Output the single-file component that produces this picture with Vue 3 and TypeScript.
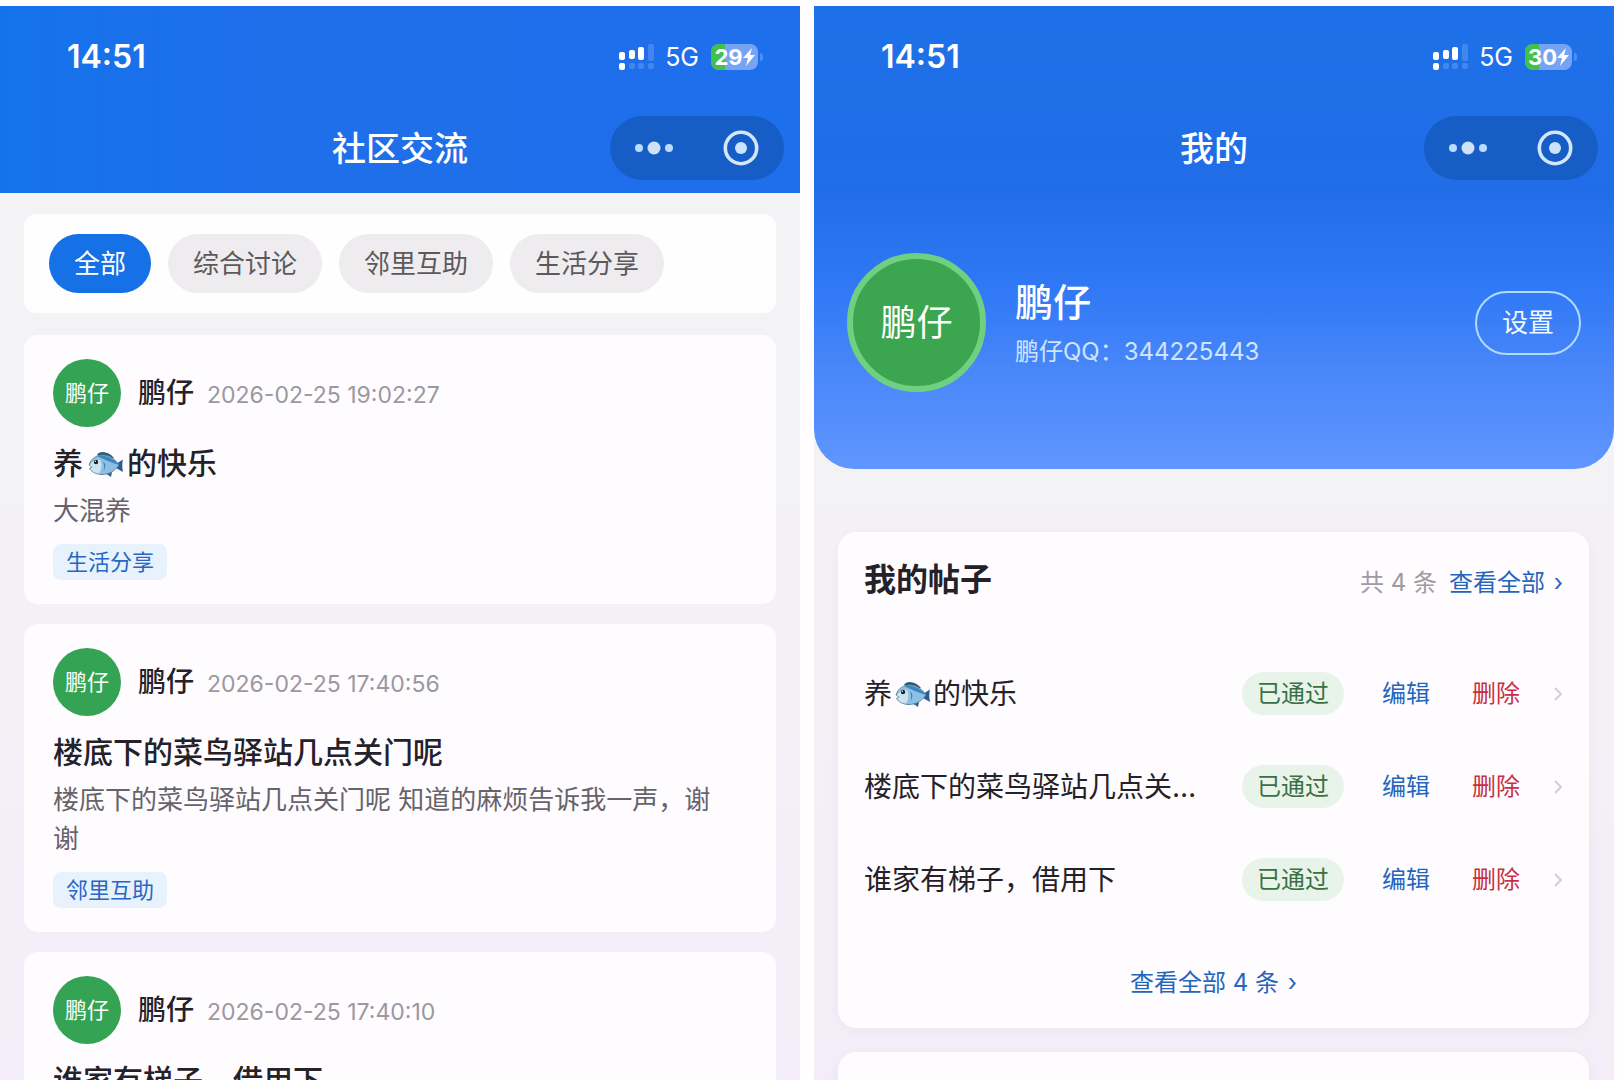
<script setup lang="ts">
import { defineComponent, h, ref } from 'vue'

interface TitlePart {
  kind: 'text' | 'fish'
  value: string
}

interface Post {
  id: number
  author: string
  time: string
  title: string
  body: string
  tag: string
}

const FISH = '🐟'

const tabs: string[] = ['全部', '综合讨论', '邻里互助', '生活分享']
const activeTab = ref<string>('全部')

const posts: Post[] = [
  {
    id: 1,
    author: '鹏仔',
    time: '2026-02-25 19:02:27',
    title: '养🐟的快乐',
    body: '大混养',
    tag: '生活分享',
  },
  {
    id: 2,
    author: '鹏仔',
    time: '2026-02-25 17:40:56',
    title: '楼底下的菜鸟驿站几点关门呢',
    body: '楼底下的菜鸟驿站几点关门呢 知道的麻烦告诉我一声，谢谢',
    tag: '邻里互助',
  },
  {
    id: 3,
    author: '鹏仔',
    time: '2026-02-25 17:40:10',
    title: '谁家有梯子，借用下',
    body: '谁家有梯子，借用下',
    tag: '邻里互助',
  },
]

function titleParts(title: string): TitlePart[] {
  return title
    .split(new RegExp(`(${FISH})`, 'u'))
    .filter((s) => s.length > 0)
    .map((s) => ({ kind: s === FISH ? 'fish' : 'text', value: s }))
}

// Status bar and mini-program navigation shared by both screens.
const PhoneTop = defineComponent({
  props: {
    title: { type: String, required: true },
    battery: { type: Number, required: true },
  },
  setup(props) {
    const bar = (x: number, y: number, height: number, opacity: number) =>
      h('rect', { x, y, width: 6, height, rx: 2, fill: '#fff', 'fill-opacity': opacity })
    return () => [
      h('div', { class: 'status' }, [
        h('span', { class: 'clock' }, '14:51'),
        h('div', { class: 'indicators' }, [
          h('svg', { class: 'signal', viewBox: '0 0 36 26', width: 36, height: 26, 'aria-hidden': 'true' }, [
            bar(0, 8, 8, 1),
            bar(10, 6, 9, 1),
            bar(19, 3, 13, 1),
            bar(29, 0, 17, 0.16),
            bar(0, 19, 7, 1),
            bar(10, 19, 6, 0.16),
            bar(19, 19, 6, 0.16),
            bar(29, 19, 6, 0.16),
          ]),
          h('span', { class: 'network' }, '5G'),
          h('span', { class: 'battery' }, [
            h('span', { class: 'battery-body' }, [
              h('span', { class: 'battery-fill', style: { width: `${props.battery}%` } }),
              h('span', { class: 'battery-value' }, String(props.battery)),
              h('svg', { class: 'bolt', viewBox: '0 0 12 18', width: 12, height: 18, 'aria-hidden': 'true' }, [
                h('path', { d: 'M9 0 0 10h5L3 18l9-11H7z', fill: '#fff' }),
              ]),
            ]),
            h('span', { class: 'battery-tip' }),
          ]),
        ]),
      ]),
      h('div', { class: 'nav' }, [
        h('h1', { class: 'nav-title' }, props.title),
        h('div', { class: 'capsule' }, [
          h('button', { class: 'capsule-btn', type: 'button', 'aria-label': '更多' }, [
            h('svg', { viewBox: '0 0 40 14', width: 40, height: 14 }, [
              h('circle', { cx: 5, cy: 7, r: 4, fill: '#b9dcff' }),
              h('circle', { cx: 20, cy: 7, r: 6.5, fill: '#cfe1f7' }),
              h('circle', { cx: 35, cy: 7, r: 4, fill: '#b9dcff' }),
            ]),
          ]),
          h('button', { class: 'capsule-btn', type: 'button', 'aria-label': '关闭' }, [
            h('svg', { viewBox: '0 0 36 36', width: 36, height: 36 }, [
              h('circle', { cx: 18, cy: 18, r: 15.7, fill: 'none', stroke: '#d3e6fd', 'stroke-width': 3.6 }),
              h('circle', { cx: 18, cy: 18, r: 6, fill: '#c8e4ff' }),
            ]),
          ]),
        ]),
      ]),
    ]
  },
})

const FishIcon = defineComponent({
  setup() {
    return () =>
      h('svg', { class: 'fish', viewBox: '0 0 36 28', role: 'img', 'aria-label': FISH }, [
        h('path', { d: 'M9 5C11 0 21 1 26 8L18 9z', fill: '#2f5878' }),
        h('path', { d: 'M17 23l6 4 1-5zM10 23l4 2 2-2z', fill: '#3b5f80' }),
        h('path', { d: 'M28 14L35 9.5C34 13 34 18 35 22L28 18z', fill: '#2a5a94' }),
        h('path', {
          d: 'M1 15C3 8 9 5 15 5C22 5 28 10 31 15C27 21 21 24.5 14 24.5C7 24.5 3 21 1.5 18.5L4 17z',
          fill: '#8cc0e6',
          stroke: '#56778f',
          'stroke-width': 0.8,
        }),
        h('path', { d: 'M9 6C16 4 26 8 31 15C24 13 17 10 9 6z', fill: '#3f86bb' }),
        h('path', { d: 'M2 15.5C4 11 8 9 12 10C14 14 14 19 11 23.5C6 23 3 20.5 2.5 18.5L5 17z', fill: '#cfe3ee' }),
        h('path', { d: 'M15 11.5C18 13 18 17.5 15.5 21C16.500 18 16.500 14 15 11.500z', fill: '#3f7fb8' }),
        h('circle', { cx: 8, cy: 12, r: 2.2, fill: '#17212c' }),
        h('circle', { cx: 7.4, cy: 11.3, r: 0.7, fill: '#fff' }),
      ])
  },
})
</script>

<template>
  <div class="board">
    <section class="screen">
      <header class="head head-plain">
        <PhoneTop title="社区交流" :battery="29" />
      </header>
      <main class="feed">
        <nav class="tabs" aria-label="分类">
          <button
            v-for="tab in tabs"
            :key="tab"
            type="button"
            class="tab"
            :class="{ active: tab === activeTab }"
            @click="activeTab = tab"
          >{{ tab }}</button>
        </nav>
        <article v-for="post in posts" :key="post.id" class="post">
          <div class="byline">
            <span class="avatar">{{ post.author }}</span>
            <span class="author">{{ post.author }}</span>
            <time class="time">{{ post.time }}</time>
          </div>
          <h2 class="post-title">
            <template v-for="(part, i) in titleParts(post.title)" :key="i"><FishIcon v-if="part.kind === 'fish'" /><template v-else>{{ part.value }}</template></template>
          </h2>
          <p class="post-body">{{ post.body }}</p>
          <span class="tag">{{ post.tag }}</span>
        </article>
      </main>
    </section>

    <section class="screen">
      <header class="head head-profile">
        <PhoneTop title="我的" :battery="30" />
        <div class="profile">
          <span class="avatar avatar-large">鹏仔</span>
          <div class="identity">
            <strong class="nickname">鹏仔</strong>
            <span class="contact">鹏仔QQ：344225443</span>
          </div>
          <button type="button" class="settings">设置</button>
        </div>
      </header>
      <main class="mine">
        <section class="panel">
          <div class="panel-head">
            <h2 class="panel-title">我的帖子</h2>
            <span class="count">共 4 条</span>
            <a class="link" href="#">查看全部 <span class="arrow">›</span></a>
          </div>
          <ul class="rows">
            <li v-for="post in posts" :key="post.id" class="row">
              <span class="row-title"><template v-for="(part, i) in titleParts(post.title)" :key="i"><FishIcon v-if="part.kind === 'fish'" /><template v-else>{{ part.value }}</template></template></span>
              <span class="badge">已通过</span>
              <button type="button" class="action">编辑</button>
              <button type="button" class="action danger">删除</button>
              <svg class="chevron" viewBox="0 0 8 16" width="8" height="16" aria-hidden="true">
                <path d="M1 2l6 6-6 6" fill="none" stroke="#d3cdd8" stroke-width="2" />
              </svg>
            </li>
          </ul>
          <a class="link more" href="#">查看全部 4 条 <span class="arrow">›</span></a>
        </section>
        <section class="panel"></section>
      </main>
    </section>
  </div>
</template>

<style>
body {
  margin: 0;
  background: #fffdfe;
}
</style>

<style scoped>
.board {
  display: grid;
  grid-template-columns: minmax(0, 1fr) minmax(0, 1fr);
  gap: 14px;
  box-sizing: border-box;
  height: 100vh;
  padding: 6px 4px 0 0;
  overflow: hidden;
  font-family: Inter, 'Noto Sans CJK SC', sans-serif;
  color: #242128;
}
.board :deep(button) {
  margin: 0;
  padding: 0;
  border: 0;
  background: none;
  font: inherit;
  cursor: pointer;
}
.board h2,
.board p,
.board ul {
  margin: 0;
  padding: 0;
}
.screen {
  overflow: hidden;
  background: linear-gradient(#f3f2f5 45%, #f3edf9);
}

/* Header */
.head {
  color: #fff;
}
.head-plain {
  height: 187px;
  background: linear-gradient(90deg, #1473eb, #1f6eea 35%, #1e6fec);
}
.head-profile {
  height: 463px;
  border-radius: 0 0 40px 40px;
  background: linear-gradient(#1d71e7, #216de7 40%, #3179f6 62%, #4886f9 78%, #6096ff);
}
:deep(.status) {
  display: flex;
  align-items: center;
  justify-content: space-between;
  height: 102px;
  padding: 0 37px 0 67px;
}
:deep(.clock) {
  font-size: 32px;
  font-weight: 600;
  line-height: 40px;
}
:deep(.indicators) {
  display: flex;
  align-items: center;
  height: 26px;
}
:deep(.network) {
  margin: 0 12px 0 10px;
  font-size: 25px;
  line-height: 26px;
}
:deep(.battery) {
  display: flex;
  align-items: center;
  gap: 2px;
}
:deep(.battery-body) {
  position: relative;
  display: flex;
  align-items: center;
  justify-content: center;
  width: 47px;
  height: 26px;
  border-radius: 8px;
  overflow: hidden;
  background: #75a4f4;
}
:deep(.battery-fill) {
  position: absolute;
  inset: 0 auto 0 0;
  background: #3fc14c;
}
:deep(.battery-value) {
  position: relative;
  font-size: 22px;
  font-weight: 700;
  line-height: 26px;
}
:deep(.bolt) {
  position: relative;
}
:deep(.battery-tip) {
  width: 3px;
  height: 8px;
  border-radius: 0 3px 3px 0;
  background: #4b8ff3;
}
:deep(.nav) {
  display: grid;
  grid-template-columns: 1fr auto 1fr;
  align-items: center;
  padding: 8px 16px 0;
}
:deep(.nav-title) {
  grid-column: 2;
  margin: 0;
  padding-top: 2px;
  font-size: 34px;
  font-weight: 500;
  line-height: 48px;
}
:deep(.capsule) {
  display: grid;
  grid-template-columns: 1fr 1fr;
  justify-self: end;
  width: 174px;
  height: 64px;
  border-radius: 32px;
  background: #175dc6;
}
:deep(.capsule-btn) {
  display: flex;
  align-items: center;
  justify-content: center;
}

/* Community feed */
.feed {
  display: flex;
  flex-direction: column;
  gap: 20px;
  padding: 21px 24px 0;
}
.tabs {
  display: flex;
  gap: 17px;
  margin-bottom: 2px;
  padding: 20px 25px;
  border-radius: 12px;
  background: #fffeff;
}
.board .tabs .tab {
  height: 59px;
  padding: 0 25px;
  border-radius: 30px;
  background: #eeecee;
  color: #5b595c;
  font-size: 26px;
  line-height: 36px;
}
.board .tabs .tab.active {
  background: #1670e6;
  color: #fff;
}
.post {
  padding: 24px 29px;
  border-radius: 14px;
  background: #fefcff;
}
.byline {
  display: flex;
  align-items: center;
}
.avatar {
  display: flex;
  align-items: center;
  justify-content: center;
  box-sizing: border-box;
  width: 68px;
  height: 68px;
  border-radius: 50%;
  background: #34a354;
  color: #fff;
  font-size: 22px;
  line-height: 32px;
}
.author {
  margin: 0 13px 0 17px;
  font-size: 28px;
  font-weight: 500;
  line-height: 40px;
}
.time {
  padding-top: 4px;
  color: #9b98a0;
  font-size: 23px;
  line-height: 30px;
}
.board .post-title {
  padding-top: 14px;
  font-size: 30px;
  font-weight: 500;
  line-height: 44px;
}
.fish {
  width: 36px;
  height: 28px;
  margin: 0 2px 0 3px;
  vertical-align: -4px;
}
.post-title .fish {
  margin: 0 3px 0 5px;
}
.board .post-body {
  padding: 6px 24px 14px 0;
  color: #67636b;
  font-size: 26px;
  line-height: 39px;
}
.tag {
  display: block;
  width: fit-content;
  padding: 0 13px;
  border-radius: 8px;
  background: #e8f2fd;
  color: #2767c4;
  font-size: 22px;
  line-height: 36px;
}

/* Profile */
.profile {
  display: flex;
  align-items: center;
  padding: 73px 33px 0;
}
.avatar-large {
  width: 139px;
  height: 139px;
  border: 6px solid #6fd082;
  background: #3ba54f;
  font-size: 36px;
}
.identity {
  display: flex;
  flex: 1;
  flex-direction: column;
  margin-left: 29px;
  padding-top: 2px;
}
.nickname {
  font-size: 38px;
  font-weight: 500;
  line-height: 56px;
}
.contact {
  color: #cfe5ff;
  font-size: 24px;
  line-height: 44px;
}
.board .profile .settings {
  box-sizing: border-box;
  width: 106px;
  height: 64px;
  border: 2px solid #b0dcff;
  border-radius: 32px;
  color: #f0f8ff;
  font-size: 26px;
  line-height: 36px;
}
.mine {
  display: flex;
  flex-direction: column;
  gap: 24px;
  padding: 63px 25px 0 24px;
}
.panel {
  min-height: 60px;
  padding: 24px 26px;
  border-radius: 18px;
  background: #fefcff;
  box-shadow: 0 2px 14px rgba(60, 30, 80, 0.04);
}
.panel-head {
  display: flex;
  align-items: center;
  height: 48px;
}
.panel-title {
  flex: 1;
  font-size: 32px;
  font-weight: 600;
  line-height: 46px;
}
.count {
  margin-right: 12px;
  color: #9f9aa2;
  font-size: 24px;
}
.link {
  color: #2566bd;
  font-size: 24px;
  text-decoration: none;
}
.arrow {
  margin-left: 2px;
}
.board .rows {
  padding: 43px 0 36px;
  list-style: none;
}
.row {
  display: flex;
  align-items: center;
  height: 93px;
  padding-right: 1px;
}
.row-title {
  flex: 1;
  min-width: 0;
  margin-right: 36px;
  overflow: hidden;
  font-size: 28px;
  line-height: 42px;
  text-overflow: ellipsis;
  white-space: nowrap;
}
.badge {
  padding: 0 15px;
  border-radius: 22px;
  background: #e8f4ea;
  color: #3b7044;
  font-size: 24px;
  line-height: 43px;
}
.board .row .action {
  margin-left: 38px;
  color: #2566bd;
  font-size: 24px;
  line-height: 42px;
}
.board .row .danger {
  margin-left: 42px;
  color: #c73043;
}
.chevron {
  margin-left: 34px;
}
.more {
  display: block;
  width: fit-content;
  margin: 0 auto;
  line-height: 42px;
}
</style>
